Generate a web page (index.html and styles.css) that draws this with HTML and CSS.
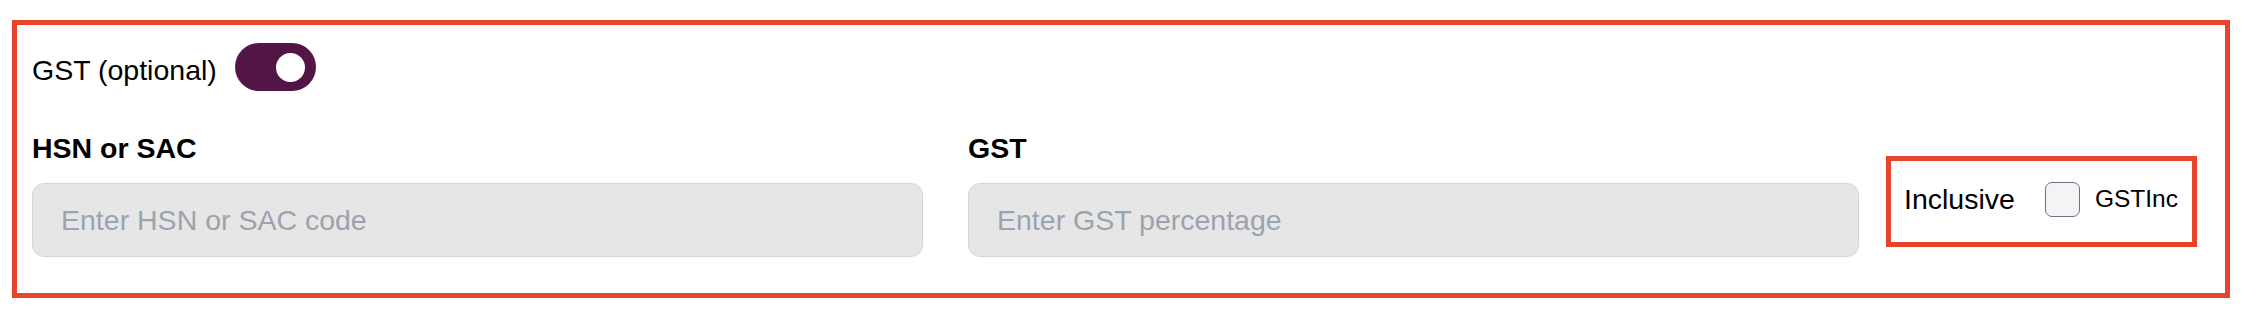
FILE: index.html
```html
<!DOCTYPE html>
<html lang="en">
<head>
<meta charset="utf-8">
<title>GST</title>
<link rel="stylesheet" href="styles.css">
</head>
<body>
  <section class="panel">
    <div class="gst-head">
      <span class="gst-title">GST (optional)</span>
      <button class="toggle" type="button" aria-pressed="true"><span class="knob"></span></button>
    </div>
    <div class="fields">
      <div class="field">
        <label class="field-label" for="hsn">HSN or SAC</label>
        <input class="field-input" id="hsn" type="text" placeholder="Enter HSN or SAC code">
      </div>
      <div class="field">
        <label class="field-label" for="gst">GST</label>
        <input class="field-input" id="gst" type="text" placeholder="Enter GST percentage">
      </div>
      <div class="inclusive">
        <span class="inclusive-label">Inclusive</span>
        <input class="check" id="gstinc" type="checkbox">
        <label class="check-label" for="gstinc">GSTInc</label>
      </div>
    </div>
  </section>
</body>
</html>
```

FILE: styles.css
```css
html, body {
  margin: 0;
  padding: 0;
  background: #ffffff;
}

body {
  font-family: "Liberation Sans", Arial, sans-serif;
  color: #000000;
  padding: 20px 16px 0 12px;
}

.panel {
  border: 5px solid #e8432b;
  padding: 18px 28px 36px 15px;
  box-sizing: border-box;
  height: 278px;
}

.gst-head {
  display: flex;
  align-items: center;
  gap: 18px;
  height: 48px;
}

.gst-title {
  font-size: 28.5px;
  line-height: 34px;
  margin-top: 6px;
}

.toggle {
  width: 81px;
  height: 48px;
  border: none;
  border-radius: 24px;
  background: #531545;
  padding: 0 11px 0 0;
  display: flex;
  align-items: center;
  justify-content: flex-end;
  margin: 0;
}

.knob {
  width: 29px;
  height: 29px;
  border-radius: 50%;
  background: #ffffff;
  display: block;
}

.fields {
  display: flex;
  align-items: flex-end;
  margin-top: 40px;
}

.field {
  width: 891px;
  display: flex;
  flex-direction: column;
}

.field + .field {
  margin-left: 45px;
}

.field-label {
  font-size: 28.5px;
  font-weight: 700;
  line-height: 34px;
  margin-bottom: 18px;
}

.field-input {
  box-sizing: border-box;
  height: 74px;
  width: 100%;
  margin: 0;
  border: 1.5px solid #d4d6db;
  border-radius: 12px;
  background: #e6e6e7;
  padding: 0 28px;
  font-family: "Liberation Sans", Arial, sans-serif;
  font-size: 28.5px;
  color: #111827;
  outline: none;
}

.field-input::placeholder {
  color: #9ca3af;
}

.inclusive {
  box-sizing: border-box;
  width: 311px;
  height: 91px;
  margin-left: 27px;
  margin-bottom: 10px;
  border: 5px solid #e8432b;
  display: flex;
  align-items: center;
  padding: 0 12px 5px 13px;
}

.inclusive-label {
  font-size: 28.5px;
  line-height: 34px;
}

.check {
  appearance: none;
  -webkit-appearance: none;
  width: 35px;
  height: 35px;
  margin: 0 0 0 30px;
  box-sizing: border-box;
  border: 1.5px solid #6b7280;
  border-radius: 7px;
  background: #f3f4f6;
}

.check-label {
  font-size: 24.5px;
  line-height: 30px;
  margin-left: 15px;
}
```
